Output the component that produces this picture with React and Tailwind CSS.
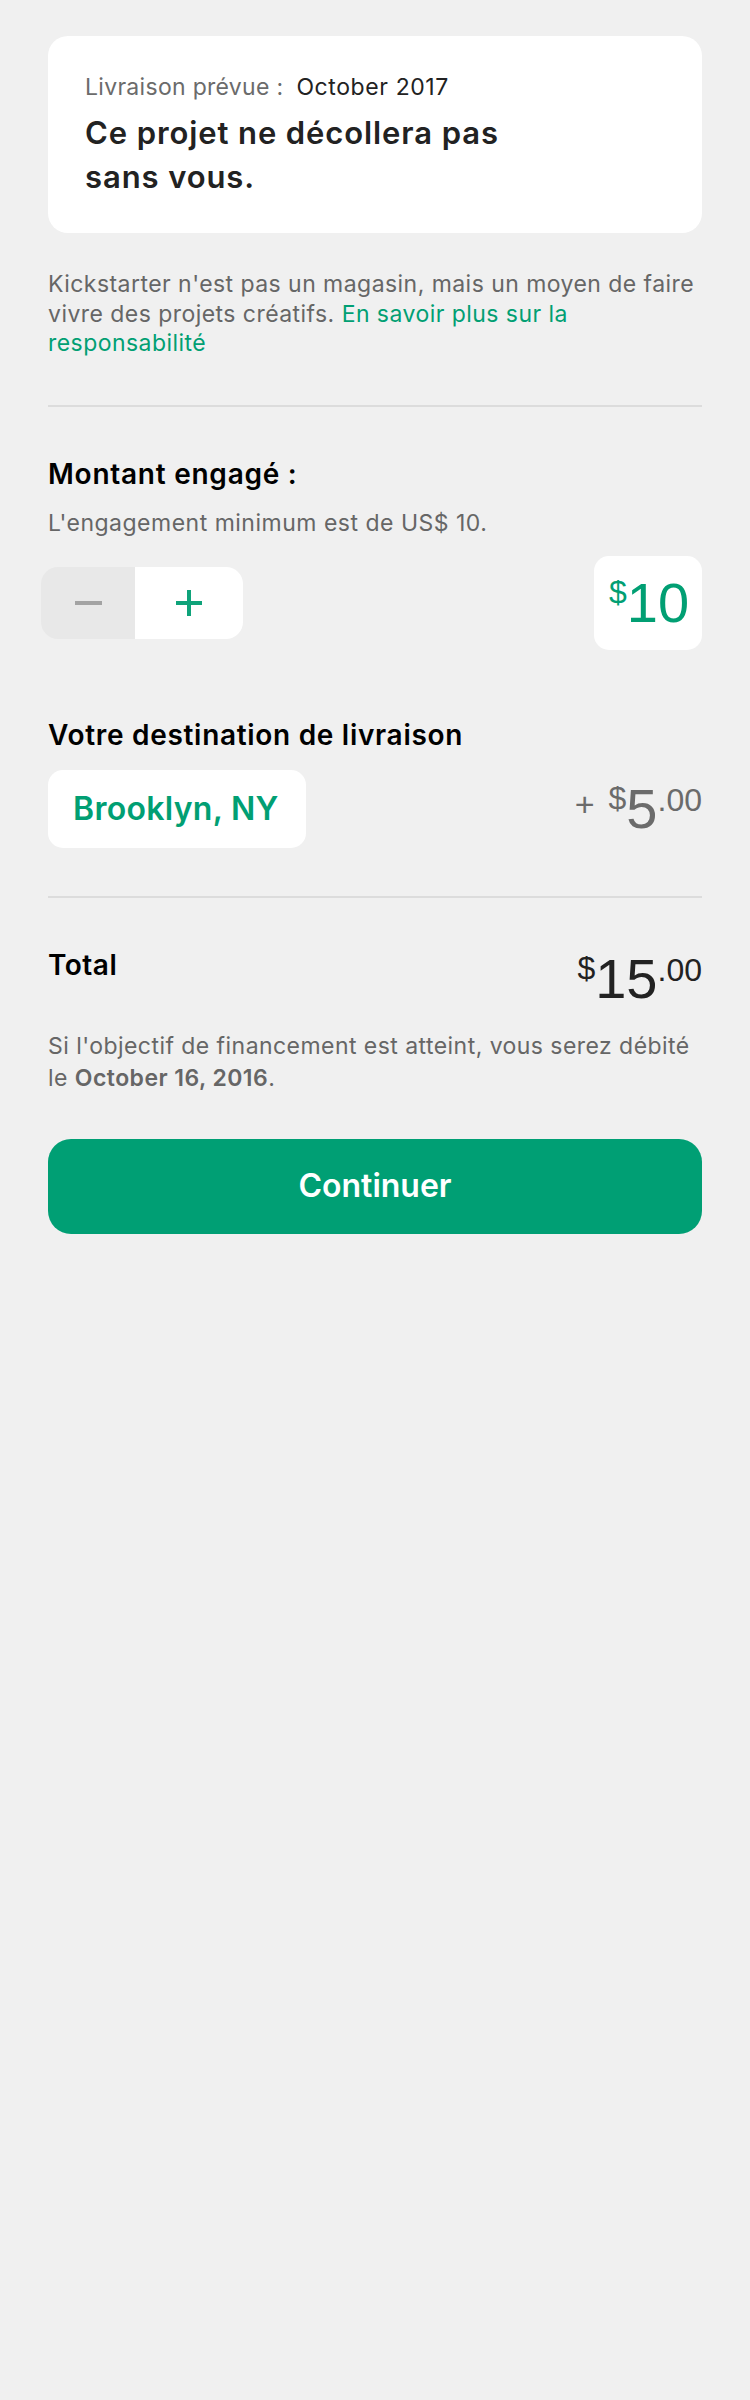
export default function App() {
  const sans = { fontFamily: "Inter, 'Noto Sans', sans-serif" };
  const num = { fontFamily: "'Liberation Sans', Arial, sans-serif" };
  return (
    <div className="min-h-[2400px] w-[750px] bg-[#f0f0f0] px-[48px] pt-[36px]" style={sans}>
      {/* Card */}
      <div className="rounded-[20px] bg-white pl-[37px] pr-[37px] pt-[36px] pb-[34px]">
        <div className="text-[23px] leading-[30px] tracking-[0.3px] text-[#6b6b6b]">
          Livraison prévue :<span className="ml-[13px] tracking-[0.6px] text-[#222222]">October 2017</span>
        </div>
        <div className="mt-[9px] text-[31px] font-semibold leading-[44px] tracking-[0.9px] text-[#222222]">
          Ce projet ne décollera pas
          <br />
          sans vous.
        </div>
      </div>

      <p className="mt-[37px] text-[23px] leading-[29.5px] tracking-[0.45px] text-[#666666]">
        Kickstarter n'est pas un magasin, mais un moyen de faire vivre des projets créatifs.{" "}
        <span className="text-[#019f73]">En savoir plus sur la responsabilité</span>
      </p>

      <div className="mt-[46px] h-[2px] bg-[#dcdcdc]" />

      <h2 className="mt-[50px] text-[28px] font-semibold leading-[34px] tracking-[0.75px] text-black">Montant engagé :</h2>
      <p className="mt-[18px] text-[23px] leading-[29px] tracking-[0.5px] text-[#666666]">L'engagement minimum est de US$ 10.</p>

      <div className="mt-[18px] flex items-center justify-between">
        <div className="ml-[-7px] flex h-[72px] w-[202px] overflow-hidden rounded-[17px]">
          <div className="flex w-[94px] items-center justify-center bg-[#e8e8e8]">
            <div className="h-[4px] w-[27px] bg-[#a3a3a3]" />
          </div>
          <div className="relative flex flex-1 items-center justify-center bg-white">
            <div className="absolute h-[26px] w-[4px] bg-[#0fa37a]" />
            <div className="absolute h-[4px] w-[26px] bg-[#0fa37a]" />
          </div>
        </div>
        <div
          className="flex h-[94px] w-[108px] items-center justify-center rounded-[15px] bg-white pl-[2px] text-[#019f73]"
          style={num}
        >
          <div className="flex items-start">
            <span className="mt-[1px] text-[32px] leading-none">$</span>
            <span className="text-[56px] leading-none">10</span>
          </div>
        </div>
      </div>

      <h2 className="mt-[68px] text-[28px] font-semibold leading-[34px] tracking-[0.7px] text-black">Votre destination de livraison</h2>

      <div className="mt-[18px] flex items-center justify-between">
        <div className="flex h-[78px] w-[258px] items-center rounded-[15px] bg-white pl-[25px] text-[32px] font-semibold tracking-[0.3px] text-[#019f73]">
          Brooklyn, NY
        </div>
        <div className="flex items-start text-[#6b6b6b]" style={num}>
          <span className="mr-[14px] mt-[6px] text-[34px] leading-none">+</span>
          <span className="mt-[1px] text-[32px] leading-none">$</span>
          <span className="text-[56px] leading-none">5</span>
          <span className="mt-[3px] text-[32px] leading-none">.00</span>
        </div>
      </div>

      <div className="mt-[48px] h-[2px] bg-[#dcdcdc]" />

      <div className="mt-[50px] flex items-start justify-between">
        <span className="text-[28px] font-semibold leading-[34px] tracking-[0.5px] text-black">Total</span>
        <div className="mt-[3px] flex items-start text-[#222222]" style={num}>
          <span className="mt-[1px] text-[32px] leading-none">$</span>
          <span className="text-[56px] leading-none">15</span>
          <span className="mt-[3px] text-[32px] leading-none">.00</span>
        </div>
      </div>

      <p className="mt-[23px] text-[23px] leading-[32px] tracking-[0.45px] text-[#666666]">
        Si l'objectif de financement est atteint, vous serez débité le{" "}
        <span className="font-semibold">October 16, 2016</span>.
      </p>

      <button className="mt-[45px] flex h-[95px] w-full items-center justify-center rounded-[23px] bg-[#009f74] text-[32px] font-semibold text-white">
        Continuer
      </button>
    </div>
  );
}
